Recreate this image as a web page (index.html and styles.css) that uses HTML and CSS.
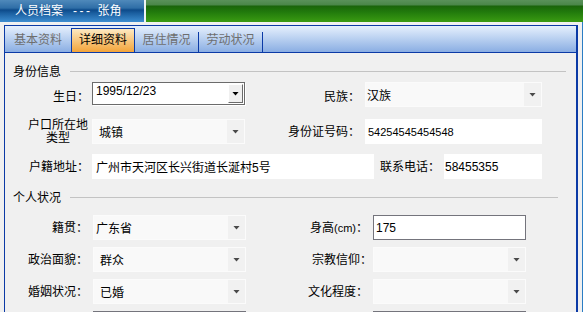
FILE: index.html
```html
<!DOCTYPE html>
<html lang="zh-CN">
<head>
<meta charset="utf-8">
<title>人员档案</title>
<link rel="stylesheet" href="styles.css">
</head>
<body>
<div class="window">
  <div class="titlebar">
    <div class="title">人员档案<span class="dash">---</span>张角</div>
    <div class="title-sep"></div>
    <div class="title-fill"></div>
  </div>
  <div class="frame">
    <div class="tabctl">
      <div class="tabstrip">
        <div class="tab t1">基本资料</div>
        <div class="tab active">详细资料</div>
        <div class="tab t3">居住情况</div>
        <div class="tab-sep"></div>
        <div class="tab t4">劳动状况</div>
        <div class="tab-sep"></div>
      </div>
      <div class="page">
        <div class="group g1"><span class="group-title">身份信息</span><span class="group-line"></span></div>

        <div class="row r1">
          <span class="lbl la low">生日：</span>
          <div class="date"><span class="val">1995/12/23</span><span class="dbtn"><i class="arrow dark"></i></span></div>
          <span class="lbl lb low">民族：</span>
          <div class="combo wb"><span class="val p1">汉族</span><span class="cbtn"><i class="arrow"></i></span></div>
        </div>

        <div class="row r2">
          <span class="lbl two">户口所在地<br>类型</span>
          <div class="combo wa"><span class="val p6">城镇</span><span class="cbtn"><i class="arrow"></i></span></div>
          <span class="lbl lb">身份证号码：</span>
          <div class="tb wb"><span class="val p3 id">54254545454548</span></div>
        </div>

        <div class="row r3">
          <span class="lbl la">户籍地址：</span>
          <div class="tb waddr"><span class="val p4">广州市天河区长兴街道长涎村5号</span></div>
          <span class="lbl lphone">联系电话：</span>
          <div class="tb wphone"><span class="val p1">58455355</span></div>
        </div>

        <div class="group g2"><span class="group-title">个人状况</span><span class="group-line"></span></div>

        <div class="row r4">
          <span class="lbl lc">籍贯：</span>
          <div class="combo wc"><span class="val p2">广东省</span><span class="cbtn"><i class="arrow"></i></span></div>
          <span class="lbl ld pr">身高<span class="cm">(cm)</span>：</span>
          <div class="tb tbb wd"><span class="val p2">175</span></div>
        </div>

        <div class="row r5">
          <span class="lbl lc">政治面貌：</span>
          <div class="combo wc"><span class="val p6">群众</span><span class="cbtn"><i class="arrow"></i></span></div>
          <span class="lbl ld">宗教信仰：</span>
          <div class="combo wd"><span class="val"></span><span class="cbtn"><i class="arrow"></i></span></div>
        </div>

        <div class="row r6">
          <span class="lbl lc">婚姻状况：</span>
          <div class="combo wc"><span class="val p6">已婚</span><span class="cbtn"><i class="arrow"></i></span></div>
          <span class="lbl ld pr">文化程度：</span>
          <div class="combo wd"><span class="val"></span><span class="cbtn"><i class="arrow"></i></span></div>
        </div>

        <div class="row r7">
          <span class="lbl lc"></span>
          <div class="tb tbb wc"></div>
          <span class="lbl ld"></span>
          <div class="tb tbb wd"></div>
        </div>
      </div>
    </div>
  </div>
</div>
</body>
</html>
```

FILE: styles.css
```css
* { box-sizing: border-box; }

html, body {
  margin: 0;
  padding: 0;
}

body {
  font-family: "Liberation Sans", "Noto Sans CJK SC", sans-serif;
  font-size: 12px;
  color: #000;
  background: #f0f0f0;
}

.window {
  width: 583px;
  height: 312px;
  overflow: hidden;
  display: flex;
  flex-direction: column;
}

/* ---------- title bar ---------- */
.titlebar {
  height: 22px;
  display: flex;
  flex-shrink: 0;
}

.title {
  width: 144px;
  padding-left: 15px;
  color: #fff;
  line-height: 22px;
  white-space: nowrap;
  background: linear-gradient(to bottom,
    #4f89bb 0px, #2f6ea7 8px, #0d4a8a 10px, #1a5e9f 13px, #3d8dd0 22px);
}

.dash {
  letter-spacing: 2.5px;
  margin: 0 5px 0 10px;
}

.title-sep {
  width: 2px;
  background: #eef3f3;
}

.title-fill {
  flex: 1;
  background: linear-gradient(to bottom,
    #5a915a 0px, #4a8649 5px, #1a640a 6px, #217a0c 12px, #3a9b12 22px);
}

/* ---------- frame / tab control ---------- */
.frame {
  flex: 1;
  padding: 3px 4px 0 4px;
  border-right: 1px solid #2b7dc4;
  background: #f0f0f0;
}

.tabctl {
  height: 100%;
  display: flex;
  flex-direction: column;
  border-top: 1px solid #0b3aa6;
  border-left: 1px solid #0b3aa6;
  border-right: 2px solid #0b3aa6;
}

.tabstrip {
  height: 27px;
  flex-shrink: 0;
  display: flex;
  align-items: flex-end;
  border-bottom: 1px solid #0b3aa6;
  background: linear-gradient(to bottom, #e6f0fd, #8aaee3);
}

.tab {
  height: 24px;
  line-height: 24px;
  text-align: center;
  color: #6e6e6e;
  white-space: nowrap;
}

.t1 { width: 66px; }
.t3, .t4 { width: 63px; }

.tab.active {
  width: 64px;
  color: #000;
  line-height: 23px;
  border: 1px solid #0b3aa6;
  border-bottom: none;
  background: linear-gradient(to bottom, #fde9c2, #f3a43a);
}

.tab-sep {
  width: 1px;
  height: 20px;
  background: #0b3aa6;
}

/* ---------- page ---------- */
.page {
  flex: 1;
  padding-top: 11px;
  overflow: hidden;
}

.group {
  height: 16px;
  display: flex;
  align-items: center;
  padding-left: 8px;
}

.group-title {
  line-height: 16px;
  white-space: nowrap;
}

.group-line {
  flex: 1;
  height: 1px;
  margin-top: -2px;
  margin-left: 9px;
  background: #c3c3c3;
}

.g1 .group-line { margin-right: 10px; }
.g2 { margin-top: 11px; }
.g2 .group-line { margin-right: 18px; }

.row {
  display: flex;
  align-items: center;
  height: 25px;
}

.r1 { margin-top: 2px; }
.r2 { margin-top: 12px; }
.r3 { margin-top: 10px; }
.r4 { margin-top: 9px; }
.r5, .r6, .r7 { margin-top: 7px; }

/* labels */
.lbl {
  text-align: right;
  white-space: nowrap;
  line-height: 14px;
  flex-shrink: 0;
}

.low { padding-top: 5px; }

.la { width: 84px; }
.lb { width: 115px; }
.lc { width: 83px; }
.ld { width: 126px; }
.ld.pr { padding-right: 4px; }

.two {
  width: 62px;
  margin-left: 22px;
  text-align: center;
  line-height: 13px;
}

.lphone { width: 66px; }

.cm { font-size: 11px; }

/* fields */
.val {
  flex: 1;
  white-space: nowrap;
  overflow: hidden;
}

.p1 { padding-left: 1px; }
.p2 { padding-left: 2px; }
.p3 { padding-left: 3px; }
.p4 { padding-left: 4px; }
.p6 { padding-left: 6px; }

.id { font-size: 11px; }

.combo, .tb {
  height: 25px;
  display: flex;
  align-items: center;
  flex-shrink: 0;
}

.combo {
  background: #f9f9f9;
  border: 1px solid #fbfbfb;
}

.cbtn {
  width: 17px;
  height: 100%;
  background: #f1f1f1;
  display: flex;
  align-items: center;
  justify-content: center;
}

.arrow {
  display: block;
  width: 7px;
  height: 4px;
  background: #4a4a4a;
  clip-path: polygon(0 0, 100% 0, 50% 100%);
}

.arrow.dark { background: #000; }

.tb { background: #fff; }

.tbb { border: 1px solid #74747c; }

.wa { margin-left: 3px; width: 153px; }
.wb { margin-left: 5px; width: 177px; }
.wc { margin-left: 5px; width: 153px; }
.wd { margin-left: 1px; width: 153px; }
.waddr { margin-left: 3px; width: 282px; }
.wphone { margin-left: 4px; width: 98px; }

/* date picker */
.date {
  margin-left: 3px;
  width: 153px;
  height: 23px;
  align-self: flex-start;
  display: flex;
  align-items: flex-start;
  background: #fff;
  border: 1px solid #6b6b6b;
  box-shadow: 1px 1px 0 #ffffff;
  flex-shrink: 0;
}

.date .val {
  padding-left: 3px;
  line-height: 16px;
}

.dbtn {
  width: 15px;
  height: 19px;
  margin: 1px 1px 0 0;
  border: 1px solid;
  border-color: #ffffff #6b6b6b #6b6b6b #ffffff;
  background: #f0f0f0;
  display: flex;
  align-items: center;
  justify-content: center;
}
```
